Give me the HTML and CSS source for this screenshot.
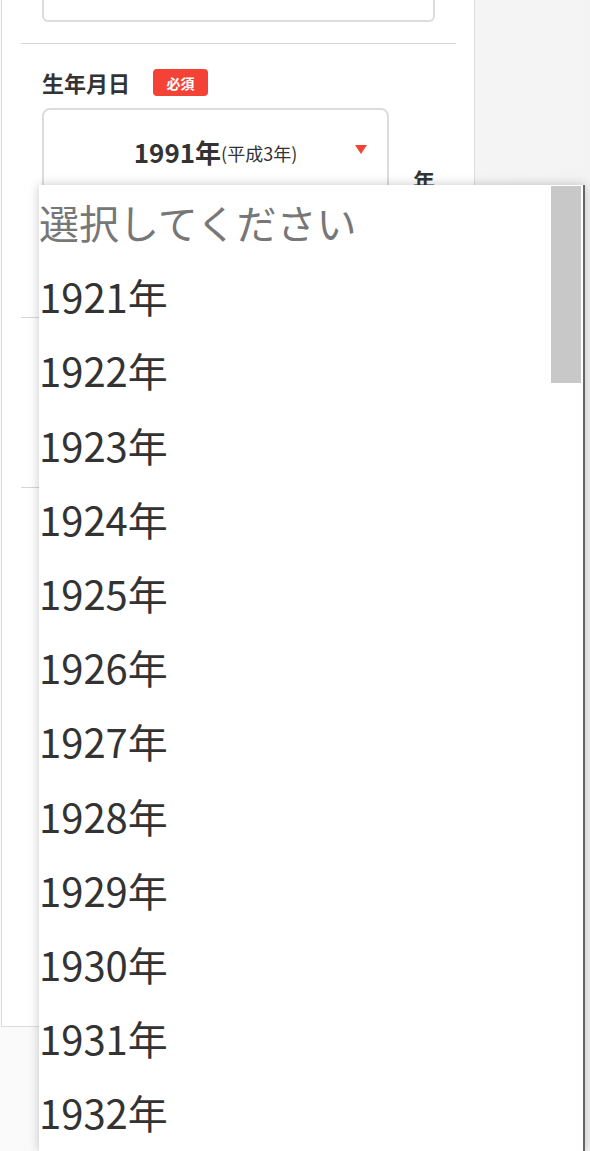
FILE: index.html
```html
<!DOCTYPE html>
<html lang="ja">
<head>
<meta charset="utf-8">
<title>生年月日</title>
<link rel="stylesheet" href="styles.css">
</head>
<body>
<div class="page">
  <div class="card">
    <section class="section section-top">
      <div class="input-box"></div>
    </section>
    <section class="section section-birth">
      <div class="field-head">
        <span class="field-label">生年月日</span>
        <span class="badge">必須</span>
      </div>
      <div class="select-row">
        <div class="select-box">
          <span class="year">1991年</span><span class="era">(平成3年)</span>
          <span class="caret"></span>
        </div>
        <span class="unit">年</span>
      </div>
    </section>
    <section class="section section-mid"></section>
    <section class="section section-last"></section>
  </div>

  <div class="dropdown">
    <ul class="option-list">
      <li class="option placeholder">選択してください</li>
      <li class="option">1921年</li>
      <li class="option">1922年</li>
      <li class="option">1923年</li>
      <li class="option">1924年</li>
      <li class="option">1925年</li>
      <li class="option">1926年</li>
      <li class="option">1927年</li>
      <li class="option">1928年</li>
      <li class="option">1929年</li>
      <li class="option">1930年</li>
      <li class="option">1931年</li>
      <li class="option">1932年</li>
    </ul>
    <div class="scroll-thumb"></div>
  </div>
</div>
</body>
</html>
```

FILE: styles.css
```css
html, body {
  margin: 0;
  padding: 0;
  overflow: hidden;
  height: 1151px;
}

body {
  background: linear-gradient(90deg, #fafafa 0%, #f3f3f3 100%);
  font-family: "Noto Sans CJK JP", "Noto Sans", sans-serif;
  color: #333;
}

.page {
  position: relative;
  height: 1151px;
}

.card {
  margin-left: 1px;
  width: 474px;
  box-sizing: border-box;
  background: #fff;
  border: 1px solid #dcdcdc;
  border-top: none;
  display: flex;
  flex-direction: column;
}

.section {
  margin: 0 18px 0 19px;
  padding: 0 21px;
  border-bottom: 1px solid #d6d6d6;
}

.section-top {
  padding-bottom: 21px;
}

.input-box {
  height: 20px;
  border: 2px solid #dcdcdc;
  border-top: none;
  border-radius: 0 0 6px 6px;
  background: #fff;
}

.section-birth {
  padding-top: 25px;
  padding-bottom: 121px;
}

.field-head {
  display: flex;
  align-items: center;
  gap: 23px;
  height: 27px;
}

.field-label {
  font-size: 22px;
  font-weight: 700;
  line-height: 27px;
  color: #333;
}

.badge {
  display: inline-flex;
  align-items: center;
  justify-content: center;
  width: 55px;
  height: 27px;
  border-radius: 4px;
  background: #f44336;
  color: #fff;
  font-size: 14px;
  font-weight: 700;
}

.select-row {
  margin-top: 12px;
  display: flex;
  align-items: flex-end;
  justify-content: space-between;
}

.select-box {
  position: relative;
  width: 347px;
  height: 88px;
  box-sizing: border-box;
  border: 2px solid #dcdcdc;
  border-radius: 8px;
  display: flex;
  align-items: center;
  justify-content: center;
  padding-bottom: 2px;
}

.year {
  font-size: 26px;
  font-weight: 700;
  color: #333;
}

.era {
  font-size: 18px;
  color: #333;
  margin-top: 4px;
}

.caret {
  position: absolute;
  right: 20px;
  top: 35px;
  width: 0;
  height: 0;
  border-left: 6px solid transparent;
  border-right: 6px solid transparent;
  border-top: 9px solid #f44336;
}

.unit {
  font-size: 22px;
  font-weight: 700;
  line-height: 33px;
  color: #333;
}

.section-mid {
  height: 169px;
}

.section-last {
  height: 538px;
  border-bottom: none;
}

.dropdown {
  position: absolute;
  left: 39px;
  top: 185px;
  width: 544px;
  height: 966px;
  background: #fff;
  border-right: 2px solid #666;
  box-shadow: 0 0 10px rgba(0, 0, 0, 0.22);
  overflow: hidden;
}

.option-list {
  list-style: none;
  margin: 0;
  padding: 0;
}

.option {
  height: 74.2px;
  display: flex;
  align-items: center;
  font-size: 40px;
  color: #333;
  white-space: nowrap;
}

.option.placeholder {
  color: #777;
}

.scroll-thumb {
  position: absolute;
  right: 2px;
  top: 1px;
  width: 30px;
  height: 197px;
  background: #c8c8c8;
}
```
